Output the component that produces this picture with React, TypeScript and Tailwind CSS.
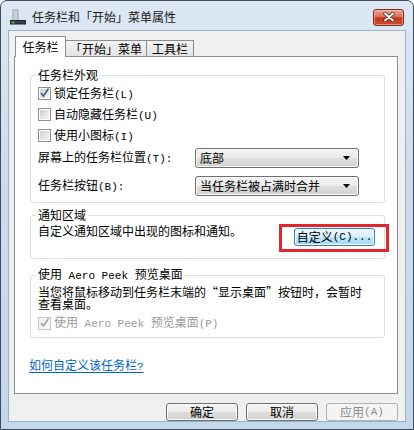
import React from 'react'

// half-width latin, like the 6px cells of the dialog font
const M = ({ children }: { children: React.ReactNode }) => (
  <span className="font-['Liberation_Mono',monospace] text-[11px]">{children}</span>
)

function Check({ checked, disabled }: { checked?: boolean; disabled?: boolean }) {
  return (
    <span
      className={`flex h-[13px] w-[13px] shrink-0 items-center justify-center border ${
        disabled ? 'border-[#c4c4c4] bg-[#f7f7f7]' : 'border-[#8e8f8f] bg-white'
      }`}
    >
      <span
        className={`relative h-[9px] w-[9px] ${
          disabled
            ? 'bg-[linear-gradient(135deg,#ececec,#fbfbfb)]'
            : 'bg-[linear-gradient(135deg,#cfcfcf,#f6f6f6)]'
        }`}
      >
        {checked && (
          <svg width="11" height="11" viewBox="0 0 11 11" className="absolute -left-px -top-[2px]">
            <path
              d="M2 6 L4.5 9 L9.5 1.5"
              fill="none"
              stroke={disabled ? '#a8a8a8' : '#4d5f8f'}
              strokeWidth="1.7"
            />
          </svg>
        )}
      </span>
    </span>
  )
}

function Combo({ value }: { value: string }) {
  return (
    <div className="flex h-[20px] w-[164px] items-center justify-between rounded-[3px] border border-[#707070] bg-[linear-gradient(#f3f3f3,#ececec_50%,#dedede_50%,#d2d2d2)] pl-[4px] pr-[8px] shadow-[inset_0_0_0_1px_#fbfbfb]">
      <span>{value}</span>
      <svg width="7" height="4" viewBox="0 0 7 4">
        <path d="M0 0h7L3.5 4z" fill="#000" />
      </svg>
    </div>
  )
}

function Btn({
  children,
  disabled,
  hot,
  wide,
}: {
  children: React.ReactNode
  disabled?: boolean
  hot?: boolean
  wide?: boolean
}) {
  const look = disabled
    ? 'border-[#adb2b5] bg-[#f4f4f4] text-[#8a8a8a]'
    : hot
      ? 'border-[#3c7fb1] bg-[linear-gradient(#eaf6fd,#d9f0fc_50%,#bee6fd_50%,#a7d9f5)] shadow-[inset_0_0_0_1px_#f4fbff]'
      : 'border-[#707070] bg-[linear-gradient(#f3f3f3,#ececec_50%,#dedede_50%,#d2d2d2)] shadow-[inset_0_0_0_1px_#fbfbfb]'
  return (
    <div
      className={`flex h-[18px] items-center justify-center whitespace-nowrap rounded-[3px] border ${
        wide ? 'w-[81px]' : 'w-[72px]'
      } ${look}`}
    >
      {children}
    </div>
  )
}

function Group({ title, children, className = '' }: { title: React.ReactNode; children: React.ReactNode; className?: string }) {
  return (
    <fieldset className={`rounded-[3px] border border-[#d5dfe5] px-[7px] ${className}`}>
      <legend className="-ml-[2px] px-[2px] leading-[12px]">{title}</legend>
      {children}
    </fieldset>
  )
}

function TitleIcon() {
  return (
    <svg width="16" height="16" viewBox="0 0 16 16">
      <rect x="3" y="1" width="5" height="11" fill="#e9ecef" stroke="#8d959e" strokeWidth="1" />
      <rect x="4" y="2" width="3" height="9" fill="#c9ced4" />
      <rect x="0.5" y="11.5" width="15" height="3.5" fill="#3a3f46" stroke="#1f2328" strokeWidth="1" />
      <rect x="1.5" y="12.5" width="3" height="2" fill="#37b34a" />
    </svg>
  )
}

export default function App() {
  return (
    <div className="flex h-[430px] w-[414px] flex-col overflow-hidden rounded-t-[7px] border border-[#3d4b5b] bg-[linear-gradient(#dde8f4,#cbdcee_40%,#c3d7ec)] font-['Noto_Sans_CJK_SC',sans-serif] text-[12px] leading-[12px] text-black">
      {/* title bar */}
      <div className="flex h-[29px] shrink-0 items-center pl-[9px] pr-[9px] pt-[3px]">
        <TitleIcon />
        <span className="ml-[6px] text-[#1a1a1a]">任务栏和「开始」菜单属性</span>
        <div className="ml-auto flex h-[17px] w-[31px] items-center justify-center rounded-[3px] border border-[#7a2a1c] bg-[linear-gradient(#eaa697,#d86d58_45%,#c3381d_52%,#d24a2c)] shadow-[inset_0_0_0_1px_rgba(255,210,200,0.5)]">
          <svg width="12" height="10" viewBox="0 0 12 10">
            <path d="M2 1.5 L10 8.5 M10 1.5 L2 8.5" stroke="#5a1a10" strokeWidth="3.4" strokeLinecap="round" />
            <path d="M2 1.5 L10 8.5 M10 1.5 L2 8.5" stroke="#fff" strokeWidth="2" strokeLinecap="round" />
          </svg>
        </div>
      </div>

      {/* client area */}
      <div className="mx-[7px] flex h-[392px] flex-col border border-[#9eb2c6] bg-[#f0f0f0] pl-[5px] pr-[7px] pt-[5px]">
        {/* tabs */}
        <div className="relative z-10 flex h-[20px] items-end pl-px">
          <div className="-mb-px flex h-[21px] w-[51px] items-center justify-center border border-b-0 border-[#898c95] bg-white">
            任务栏
          </div>
          <div className="-ml-px flex h-[16px] w-[82px] items-center justify-center border border-b-0 border-[#898c95] bg-[linear-gradient(#f3f3f3,#e4e4e4)]">
            「开始」菜单
          </div>
          <div className="-ml-px flex h-[16px] w-[48px] items-center justify-center border border-b-0 border-[#898c95] bg-[linear-gradient(#f3f3f3,#e4e4e4)]">
            工具栏
          </div>
        </div>

        {/* panel */}
        <div className="flex flex-1 flex-col border border-[#898c95] bg-white pl-[15px] pr-[12px] pt-[12px]">
          <Group title="任务栏外观" className="pb-[6px]">
            <div className="pt-[2px]">
              <div className="flex h-[21px] items-center gap-[3px]">
                <Check checked />
                <span>
                  锁定任务栏<M>(L)</M>
                </span>
              </div>
              <div className="flex h-[21px] items-center gap-[3px]">
                <Check />
                <span>
                  自动隐藏任务栏<M>(U)</M>
                </span>
              </div>
              <div className="flex h-[21px] items-center gap-[3px]">
                <Check />
                <span>
                  使用小图标<M>(I)</M>
                </span>
              </div>
              <div className="mt-[2px] grid grid-cols-[157px_164px] items-center gap-y-[8px]">
                <span>
                  屏幕上的任务栏位置<M>(T):</M>
                </span>
                <Combo value="底部" />
                <span>
                  任务栏按钮<M>(B):</M>
                </span>
                <Combo value="当任务栏被占满时合并" />
              </div>
            </div>
          </Group>

          <Group title="通知区域" className="mt-[6px] pb-[12px]">
            <div className="flex items-start justify-between">
              <span className="mt-[4px]">自定义通知区域中出现的图标和通知。</span>
              <div className="relative mr-[2px] mt-[7px]">
                <Btn hot wide>
                  自定义<M>(C)...</M>
                </Btn>
                <span className="pointer-events-none absolute -bottom-[6px] -left-[15px] -right-[14px] -top-[4px] border-[3px] border-[#e3262d]" />
              </div>
            </div>
          </Group>

          <Group
            title={
              <>
                使用<M>{' Aero Peek '}</M>预览桌面
              </>
            }
            className="mt-[9px] pb-[6px]"
          >
            <div className="mt-[4px] whitespace-nowrap">
              <div className="h-[12px] leading-[12px]">当您将鼠标移动到任务栏末端的“显示桌面”按钮时，会暂时</div>
              <div className="h-[12px] leading-[12px]">查看桌面。</div>
            </div>
            <div className="mt-[5px] flex h-[16px] items-center gap-[3px] text-[#9a9a9a]">
              <Check checked disabled />
              <span>
                使用<M>{' Aero Peek '}</M>预览桌面<M>(P)</M>
              </span>
            </div>
          </Group>

          <a className="-ml-px mt-[21px] self-start text-[#0066cc] underline underline-offset-[2px]">
            如何自定义该任务栏<M>?</M>
          </a>
        </div>

        {/* dialog buttons */}
        <div className="mt-[9px] flex justify-end gap-[8px]">
          <Btn>确定</Btn>
          <Btn>取消</Btn>
          <Btn disabled>
            应用<M>(A)</M>
          </Btn>
        </div>
      </div>
    </div>
  )
}
